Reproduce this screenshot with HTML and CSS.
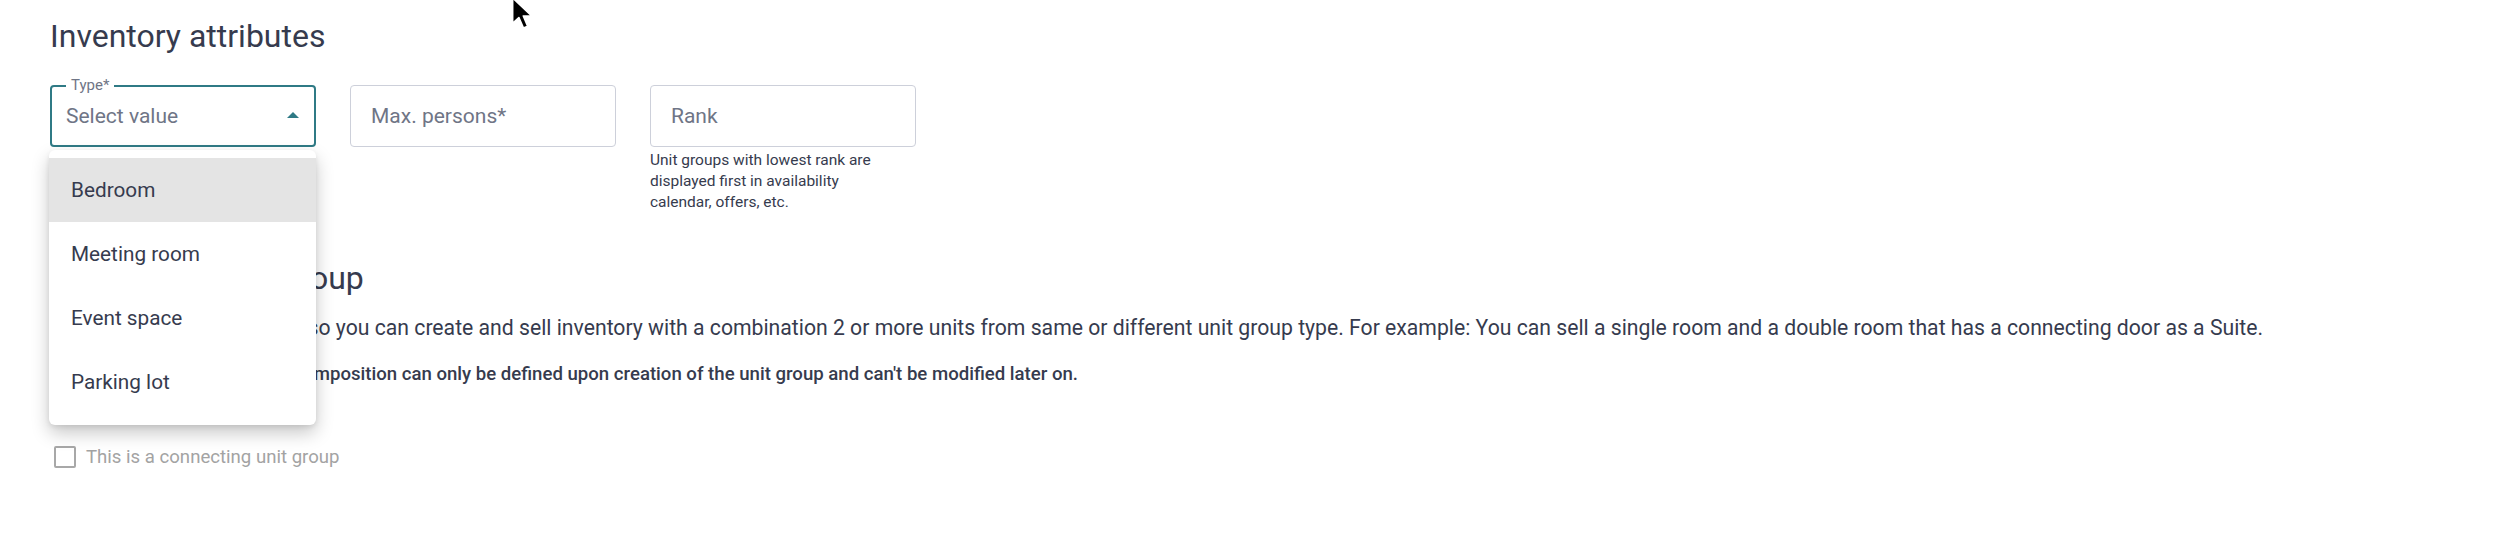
FILE: index.html
```html
<!DOCTYPE html>
<html lang="en">
<head>
    <meta charset="UTF-8">
    <meta name="viewport" content="width=device-width, initial-scale=1.0">
    <title>Unit group | Inventory attributes</title>
    <link rel="stylesheet" href="styles.css">
</head>
<body>
    <div class="page">
        <section class="inventory">
            <h2 class="section-title">Inventory attributes</h2>
            <div class="fields">
                <div class="field">
                    <div class="select is-open">
                        <span class="select-label">Type*</span>
                        <span class="select-value">Select value</span>
                        <svg class="select-arrow" width="12" height="6" viewBox="0 0 12 6" aria-hidden="true">
                            <path d="M0 6 L6 0 L12 6 Z" fill="currentColor"/>
                        </svg>
                        <ul class="menu" role="listbox">
                            <li class="menu-item is-active" role="option">Bedroom</li>
                            <li class="menu-item" role="option">Meeting room</li>
                            <li class="menu-item" role="option">Event space</li>
                            <li class="menu-item" role="option">Parking lot</li>
                        </ul>
                    </div>
                </div>
                <div class="field">
                    <input class="input" type="text" placeholder="Max. persons*">
                </div>
                <div class="field">
                    <input class="input" type="text" placeholder="Rank">
                    <p class="hint">Unit groups with lowest rank are displayed first in availability calendar, offers, etc.</p>
                </div>
            </div>
        </section>

        <section class="connecting">
            <h2 class="section-title">Connecting unit group</h2>
            <p class="lead">Set a connected unit group so you can create and sell inventory with a combination 2 or more units from same or different unit group type. For example: You can sell a single room and a double room that has a connecting door as a Suite.</p>
            <p class="note">Please note that a unit group composition can only be defined upon creation of the unit group and can't be modified later on.</p>
            <label class="checkbox">
                <input type="checkbox" disabled>
                <span class="checkbox-box"></span>
                <span>This is a connecting unit group</span>
            </label>
        </section>

        <!-- mouse pointer -->
        <svg class="pointer" width="23" height="35" viewBox="0 0 14 21" aria-hidden="true">
            <path d="M1 1 V16.5 L4.8 13 L7.6 19.4 L10.2 18.3 L7.5 12 H12.6 Z" fill="#000" stroke="#fff" stroke-width="1" stroke-linejoin="round"/>
        </svg>
    </div>
</body>
</html>
```

FILE: styles.css
```css
:root {
    --text-color: #363b4e;
    --muted-color: #6f7586;
    --border-color: #cdd0da;
    --accent-color: #2f7a85;
    --disabled-color: #a3a3a3;
    --hover-bg: #e4e4e4;
}

body {
    margin: 0;
    font-family: Roboto, 'Liberation Sans', Arial, sans-serif;
    color: var(--text-color);
    background-color: #fff;
}

.page {
    position: relative;
    padding: 16px 50px 0;
}

.section-title {
    margin: 0;
    font-size: 32px;
    font-weight: 400;
    line-height: 40px;
}

.fields {
    display: flex;
    align-items: flex-start;
    gap: 34px;
    margin-top: 29px;
}

.field {
    width: 266px;
}

.input,
.select {
    box-sizing: border-box;
    width: 100%;
    height: 62px;
    border-radius: 4px;
    font-family: inherit;
    font-size: 21px;
}

.input {
    display: block;
    padding: 0 20px;
    border: 1px solid var(--border-color);
    color: var(--text-color);
    outline: none;
}

.input::placeholder {
    color: var(--muted-color);
}

.select {
    position: relative;
    display: flex;
    align-items: center;
    justify-content: space-between;
    padding: 0 15px 0 14px;
    border: 2px solid var(--accent-color);
}

.select-label {
    position: absolute;
    top: -10px;
    left: 14px;
    padding: 0 5px;
    background-color: #fff;
    font-size: 15px;
    line-height: 16px;
    color: var(--muted-color);
}

.select-value {
    color: var(--muted-color);
}

.select-arrow {
    color: var(--accent-color);
    margin-top: -2px;
}

/* dropdown list under the open select */
.menu {
    position: absolute;
    top: 63px;
    left: -3px;
    z-index: 2;
    width: 267px;
    margin: 0;
    padding: 8px 0 11px;
    list-style: none;
    background-color: #fff;
    border-radius: 6px;
    box-shadow: 0 8px 18px rgba(0, 0, 0, 0.22), 0 2px 5px rgba(0, 0, 0, 0.08);
}

.menu-item {
    height: 64px;
    display: flex;
    align-items: center;
    padding-left: 22px;
    font-size: 20.75px;
    color: var(--text-color);
}

.menu-item.is-active {
    background-color: var(--hover-bg);
}

.hint {
    width: 240px;
    margin: 3px 0 0;
    font-size: 15.5px;
    line-height: 21px;
    color: var(--text-color);
}

.connecting {
    margin-top: 45px;
}

.lead {
    margin: 16px 0 0;
    font-size: 21.2px;
    line-height: 28px;
}

.note {
    margin: 20px 0 0;
    font-size: 18.6px;
    font-weight: 500;
    line-height: 24px;
}

.checkbox {
    display: flex;
    align-items: center;
    gap: 10px;
    margin-top: 60px;
    margin-left: 4px;
    font-size: 18.6px;
    line-height: 22px;
    color: var(--disabled-color);
}

.checkbox input {
    display: none;
}

.checkbox-box {
    box-sizing: border-box;
    width: 22px;
    height: 22px;
    border: 2px solid #a8a8a8;
    border-radius: 2px;
}

.pointer {
    position: absolute;
    top: -4px;
    left: 511px;
    z-index: 3;
}
```
